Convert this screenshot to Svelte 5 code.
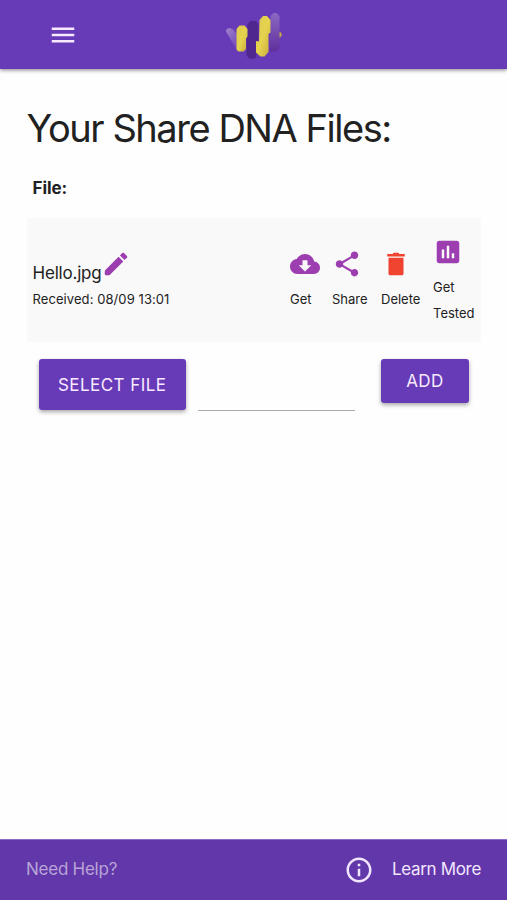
<script>
  const icons = {
    cloud: 'M19.35 10.04C18.67 6.59 15.64 4 12 4 9.11 4 6.6 5.64 5.35 8.04 2.34 8.36 0 10.91 0 14c0 3.31 2.69 6 6 6h13c2.76 0 5-2.24 5-5 0-2.64-2.05-4.78-4.65-4.96zM17 13l-5 5-5-5h3V9h4v4h3z',
    share: 'M18 16.08c-.76 0-1.44.3-1.96.77L8.91 12.7c.05-.23.09-.46.09-.7s-.04-.47-.09-.7l7.05-4.11c.54.5 1.25.81 2.04.81 1.66 0 3-1.34 3-3s-1.34-3-3-3-3 1.34-3 3c0 .24.04.47.09.7L8.04 9.81C7.5 9.31 6.79 9 6 9c-1.66 0-3 1.34-3 3s1.34 3 3 3c.79 0 1.5-.31 2.04-.81l7.12 4.16c-.05.21-.08.43-.08.65 0 1.61 1.31 2.92 2.92 2.92s2.92-1.31 2.92-2.92-1.31-2.92-2.92-2.92z',
    trash: 'M6 19.8c0 .7.5 1.2 1.2 1.2h9.6c.7 0 1.2-.5 1.2-1.2V7H6v12.8zM19 4h-4.3l-.8-1h-3.8l-.8 1H5v2h14V4z',
    chart: 'M19 3H5c-1.1 0-2 .9-2 2v14c0 1.1.9 2 2 2h14c1.1 0 2-.9 2-2V5c0-1.1-.9-2-2-2zM9 17H7v-7h2v7zm4 0h-2V7h2v10zm4 0h-2v-4h2v4z',
    pencil: 'M3 18.5V20q0 1 1 1h2.75L17.81 9.94l-3.75-3.75L3.5 16.75q-.5.5-.5 1.75zM20.71 7.04c.39-.39.39-1.02 0-1.41l-2.34-2.34c-.39-.39-1.02-.39-1.41 0l-1.83 1.83 3.75 3.75 1.83-1.83z',
    menu: 'M3 18h18v-2H3v2zm0-5h18v-2H3v2zm0-7v2h18V6H3z',
    info: 'M11 17h2v-6h-2v6zm1-15C6.48 2 2 6.48 2 12s4.48 10 10 10 10-4.48 10-10S17.52 2 12 2zm0 18c-4.41 0-8-3.59-8-8s3.59-8 8-8 8 3.59 8 8-3.59 8-8 8zM11 9h2V7h-2v2z'
  };

  const files = [{ name: 'Hello.jpg', received: '08/09 13:01' }];

  const actions = [
    { icon: 'cloud', label: 'Get' },
    { icon: 'share', label: 'Share' },
    { icon: 'trash', label: 'Delete', danger: true },
    { icon: 'chart', label: 'Get Tested' }
  ];

  let fileName = $state('');
</script>

{#snippet icon(name)}
  <svg class="icon" viewBox="0 0 24 24" aria-hidden="true"><path d={icons[name]} /></svg>
{/snippet}

<div class="page">
  <header>
    <button class="menu" aria-label="Menu">{@render icon('menu')}</button>
    <svg class="logo" viewBox="0 0 60 52" aria-hidden="true">
      <defs>
        <linearGradient id="gold" x1="0" y1="0" x2="1" y2="1">
          <stop offset="0" stop-color="#ddc94e" />
          <stop offset="0.5" stop-color="#e6d34e" />
          <stop offset="1" stop-color="#c9ab3a" />
        </linearGradient>
        <linearGradient id="lilac" x1="0" y1="0" x2="0" y2="1">
          <stop offset="0" stop-color="#8b68c3" />
          <stop offset="1" stop-color="#5f2f9c" />
        </linearGradient>
        <linearGradient id="wing" x1="0" y1="0" x2="1" y2="1">
          <stop offset="0" stop-color="#a183cc" />
          <stop offset="1" stop-color="#6f43b9" />
        </linearGradient>
      </defs>
      <path d="M2 21.5q0-3 3-3.5 2-.5 4 1.500l4 4.500v16z" fill="url(#wing)" />
      <path d="M55 22h1.500l1.500 2.500-1.500 3H55z" fill="#c3a349" />
      <path d="M22.500 30l1-16 3-3h5l3 3v19l-2 3v11l-3 2-5-1-2-3V33z" fill="#4f278f" />
      <path d="M12.500 19l3-3.500h5l3 3.500v7.500l-1.500 2V39l-2.500 2.500h-5l-2-2z" fill="url(#gold)" />
      <path d="M45.500 27l1-3V6l3-3h3l3 3v32l-2.500 3-7 1z" fill="url(#lilac)" />
      <path d="M35.500 10l3.500-4h4l3.500 4v12.500l-2 1.500v18l-4 4.500h-4L32 42.500V31l3 .5z" fill="url(#gold)" />
    </svg>
  </header>

  <main>
    <h1>Your Share DNA Files:</h1>
    <h2>File:</h2>

    {#each files as file}
      <div class="file">
        <div class="details">
          <div class="name">{file.name}{@render icon('pencil')}</div>
          <div class="received">Received: {file.received}</div>
        </div>
        {#each actions as action}
          <button class="action {action.icon}" class:danger={action.danger}>
            {@render icon(action.icon)}
            <span>{action.label}</span>
          </button>
        {/each}
      </div>
    {/each}

    <div class="upload">
      <button class="select">SELECT FILE</button>
      <input type="text" aria-label="File name" bind:value={fileName} />
      <button class="add">ADD</button>
    </div>
  </main>

  <footer>
    <span class="help">Need Help?</span>
    <span class="more">{@render icon('info')}Learn More</span>
  </footer>
</div>

<style>
  :global(body) {
    margin: 0;
    background: #fefefe;
  }

  .page {
    display: flex;
    flex-direction: column;
    height: 100vh;
    color: #212121;
    font-family: Inter, "Liberation Sans", sans-serif;
  }

  button {
    padding: 0;
    border: none;
    background: none;
    color: inherit;
    font-family: inherit;
  }

  .icon {
    display: block;
    flex: none;
    width: 30px;
    height: 30px;
    fill: currentColor;
  }

  header {
    display: grid;
    grid-template-columns: 1fr 60px 1fr;
    align-items: center;
    height: 69px;
    background: #673ab7;
    box-shadow: 0 1px 4px rgba(0, 0, 0, 0.5);
  }

  .menu {
    justify-self: start;
    margin-left: 48px;
    color: #f7e9ff;
  }

  .logo {
    width: 60px;
    height: 52px;
    margin-top: 3px;
  }

  main {
    flex: 1;
    padding: 0 26px 0 27px;
  }

  h1 {
    margin: 35px 0 0 -0.5px;
    font-size: 38px;
    font-weight: 400;
    line-height: 48px;
    letter-spacing: -1.45px;
    white-space: nowrap;
  }

  h2 {
    margin: 24px 0 0 5.5px;
    font-size: 17px;
    font-weight: 700;
    line-height: 24px;
    letter-spacing: -0.1px;
  }

  .file {
    display: grid;
    grid-template-columns: 1fr 42px 49px 52px 42px;
    align-items: center;
    box-sizing: border-box;
    height: 124px;
    margin-top: 18px;
    padding: 0 6px 0 5.5px;
    border-radius: 2px;
    background: #f9f9f9;
    font-size: 13px;
    line-height: 26px;
  }

  .name {
    display: flex;
    align-items: flex-end;
    height: 37px;
    font-size: 17px;
    letter-spacing: -0.2px;
  }

  .name .icon {
    margin: 0 0 7px -0.5px;
    color: #9c3eb0;
  }

  .received {
    letter-spacing: 0.08px;
  }

  .action {
    font-size: 13px;
    line-height: 26px;
    text-align: left;
  }

  .action .icon {
    margin-bottom: 7px;
    color: #9c3eb0;
  }

  .share .icon,
  .trash .icon {
    margin-left: -0.5px;
  }

  .chart {
    padding-top: 2px;
  }

  .danger .icon {
    color: #f04330;
  }

  .upload {
    display: flex;
    align-items: flex-start;
    padding: 17px 12px 0;
  }

  .select,
  .add {
    border-radius: 3px;
    background: #673ab7;
    box-shadow: 0 2px 4px rgba(0, 0, 0, 0.35);
    color: #f9eaff;
    font-size: 17px;
    letter-spacing: 0.45px;
  }

  .select {
    width: 146.5px;
    height: 51px;
  }

  .add {
    width: 88px;
    height: 44px;
  }

  input {
    box-sizing: border-box;
    width: 157.5px;
    height: 52px;
    margin: 0 26px 0 12px;
    border: none;
    border-bottom: 1.5px solid #aaa;
    outline: none;
    background: transparent;
    font: inherit;
  }

  footer {
    display: flex;
    align-items: center;
    justify-content: space-between;
    box-sizing: border-box;
    height: 61px;
    padding: 0 26px 2px;
    border-top: 1px solid #8e6cc2;
    background: #6237aa;
    color: #f2e6ff;
    font-size: 17px;
    letter-spacing: -0.25px;
  }

  .help {
    color: #b8a4d7;
  }

  .more {
    display: flex;
    align-items: center;
    gap: 18px;
    letter-spacing: -0.33px;
  }

  .more .icon {
    margin-top: 1px;
  }
</style>
